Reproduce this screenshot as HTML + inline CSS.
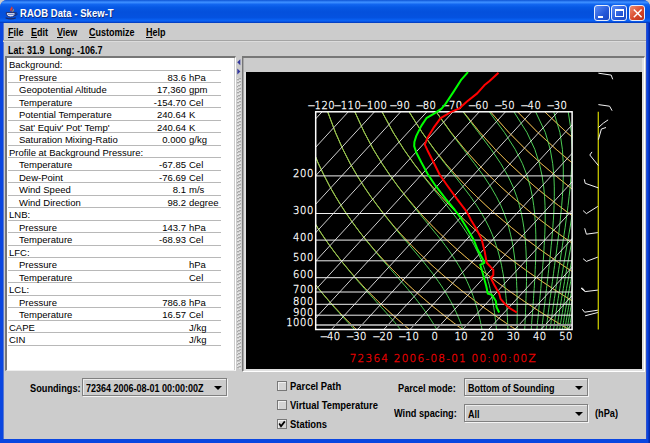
<!DOCTYPE html>
<html><head><meta charset="utf-8"><title>RAOB Data - Skew-T</title>
<style>
*{box-sizing:border-box;margin:0;padding:0}
html,body{width:650px;height:443px;overflow:hidden;background:#ccc}
body{position:relative;font-family:"Liberation Sans",Arial,sans-serif;color:#000}
.abs{position:absolute}
#win{position:absolute;left:0;top:0;width:650px;height:443px;background:linear-gradient(90deg,#0a46e0 0,#0a46e0 648px,#0428a8 649px);border-radius:7px 7px 0 0;overflow:hidden}
#title{position:absolute;left:0;top:0;width:650px;height:23px;background:linear-gradient(#0a4fd0 0,#2a78f0 5%,#3a8cff 11%,#1266f0 19%,#0658e4 32%,#0450dc 52%,#0452e0 76%,#0a62f4 89%,#0652e0 95%,#0232b0 100%)}
#title .t{position:absolute;left:20px;top:7px;transform:scaleX(.82);transform-origin:0 0;font:bold 11.5px "Liberation Sans",sans-serif;color:#fff;text-shadow:1px 1px 0 #0a2a80;white-space:nowrap;letter-spacing:.1px}
#content{position:absolute;left:3px;top:23px;width:643px;height:416px;background:#ccc;border-left:1px solid #5878d0;box-shadow:1px 0 0 #2a4ed0}
.menu{position:absolute;top:27px;font:bold 10px "Liberation Sans",sans-serif;white-space:nowrap;transform:scaleX(.9);transform-origin:0 0}
.menu u{text-decoration:underline;text-underline-offset:1px}
.lbl{position:absolute;font:bold 10px "Liberation Sans",sans-serif;white-space:nowrap;transform:scaleX(.92);transform-origin:0 0}
.btn{position:absolute;top:5px;width:16px;height:16px;border:1px solid #e8eefc;border-radius:3px}
#lpanel{position:absolute;left:5px;top:56px;width:231px;height:315px;background:#fff;border:2px solid #777;border-right:1px solid #fff;border-bottom:1px solid #eee;box-shadow:inset -1px 0 0 #ccc}
.row{position:absolute;left:8px;width:213px;height:12.5px;border-bottom:1px solid #b8b8b8;font:9.5px "Liberation Sans",sans-serif;white-space:nowrap}
.row span{position:absolute;top:1px;line-height:11px}
.combo{position:absolute;background:#ccc;border:1px solid #808080;box-shadow:inset 1px 1px 0 #ececec, 1px 1px 0 #f4f4f4;font:bold 9.5px "Liberation Sans",sans-serif;white-space:nowrap}
.combo span{position:absolute;left:3px;top:4px;font-size:10px;transform:scaleX(.9);transform-origin:0 0}
.combo i{position:absolute;right:4px;top:6.5px;width:0;height:0;border-left:4.5px solid transparent;border-right:4.5px solid transparent;border-top:4.5px solid #000}
.cb{position:absolute;width:10px;height:10px;border:1px solid #777;background:#d4d4d4;box-shadow:inset 1px 1px 0 #f0f0f0}
</style></head><body>
<div id="win">
<div id="title">
<svg class="abs" style="left:5px;top:5px" width="14" height="15" viewBox="0 0 14 15">
<path d="M6.2 0.8C7.6 2.4 4.4 3.6 5.4 5.8C5.8 6.7 6.6 7.1 6.6 7.1C5.6 5.6 8.2 4.6 7.6 2.6Z" fill="#ee3a24"/>
<path d="M8 3.2C9.2 4.2 6.8 5.4 7.4 7C8.8 5.8 9.6 4.8 8 3.2Z" fill="#f8a020"/>
<path d="M1.2 7.6H10.2C10.2 10.6 8.6 12 5.7 12S1.2 10.6 1.2 7.6Z" fill="#dfe6f8" stroke="#1c2a6c" stroke-width="1"/>
<path d="M10.2 8C12.8 7.2 13 10.4 9.6 10.6" fill="none" stroke="#1c2a6c" stroke-width="1"/>
<path d="M0.6 12.9C3.6 13.9 8 13.9 10.8 12.9" fill="none" stroke="#1c2a6c" stroke-width="1.2"/>
<path d="M2.6 9.4H8.8" stroke="#6a80c8" stroke-width="1"/>
</svg>
<div class="t">RAOB Data - Skew-T</div>
<div class="btn" style="left:594px;background:linear-gradient(135deg,#5c8df6,#2457d8 60%,#1c48c0)"><b class="abs" style="left:3px;top:10px;width:5px;height:2px;background:#fff"></b></div>
<div class="btn" style="left:611px;background:linear-gradient(135deg,#5c8df6,#2457d8 60%,#1c48c0)"><b class="abs" style="left:3px;top:3px;width:9px;height:8px;border:1px solid #fff;border-top-width:2px"></b></div>
<div class="btn" style="left:629px;background:linear-gradient(135deg,#ee8c70,#d8482a 55%,#b8321c)"><svg class="abs" style="left:1px;top:1px" width="12" height="12" viewBox="0 0 12 12"><path d="M2.8 2.5L10.6 10.3M10.6 2.5L2.8 10.3" stroke="#fff" stroke-width="1.5"/></svg></div>
</div>
<div id="content"></div>
<div class="abs" style="left:3px;top:40px;width:643px;height:1px;background:#a4a4a4"></div>
<div class="abs" style="left:3px;top:41px;width:643px;height:1px;background:#dcdcdc"></div>
<div class="menu" style="left:8px"><u>F</u>ile</div>
<div class="menu" style="left:31px"><u>E</u>dit</div>
<div class="menu" style="left:57px"><u>V</u>iew</div>
<div class="menu" style="left:89px"><u>C</u>ustomize</div>
<div class="menu" style="left:146px"><u>H</u>elp</div>
<div class="lbl" style="left:8px;top:45px;transform:scaleX(.9)">Lat: 31.9&nbsp; Long: -106.7</div>
<div id="lpanel"></div>

<div class="row" style="top:58.3px"><span style="left:1px">Background:</span></div>
<div class="row" style="top:70.8px"><span style="left:11px">Pressure</span><span style="right:35px">83.6</span><span style="left:181px">hPa</span></div>
<div class="row" style="top:83.3px"><span style="left:11px">Geopotential Altitude</span><span style="right:35px">17,360</span><span style="left:181px">gpm</span></div>
<div class="row" style="top:95.8px"><span style="left:11px">Temperature</span><span style="right:35px">-154.70</span><span style="left:181px">Cel</span></div>
<div class="row" style="top:108.3px"><span style="left:11px">Potential Temperature</span><span style="right:35px">240.64</span><span style="left:181px">K</span></div>
<div class="row" style="top:120.8px"><span style="left:11px">Sat' Equiv' Pot' Temp'</span><span style="right:35px">240.64</span><span style="left:181px">K</span></div>
<div class="row" style="top:133.3px"><span style="left:11px">Saturation Mixing-Ratio</span><span style="right:35px">0.000</span><span style="left:181px">g/kg</span></div>
<div class="row" style="top:145.8px"><span style="left:1px">Profile at Background Pressure:</span></div>
<div class="row" style="top:158.3px"><span style="left:11px">Temperature</span><span style="right:35px">-67.85</span><span style="left:181px">Cel</span></div>
<div class="row" style="top:170.8px"><span style="left:11px">Dew-Point</span><span style="right:35px">-76.69</span><span style="left:181px">Cel</span></div>
<div class="row" style="top:183.3px"><span style="left:11px">Wind Speed</span><span style="right:35px">8.1</span><span style="left:181px">m/s</span></div>
<div class="row" style="top:195.8px"><span style="left:11px">Wind Direction</span><span style="right:35px">98.2</span><span style="left:181px">degree</span></div>
<div class="row" style="top:208.3px"><span style="left:1px">LNB:</span></div>
<div class="row" style="top:220.8px"><span style="left:11px">Pressure</span><span style="right:35px">143.7</span><span style="left:181px">hPa</span></div>
<div class="row" style="top:233.3px"><span style="left:11px">Temperature</span><span style="right:35px">-68.93</span><span style="left:181px">Cel</span></div>
<div class="row" style="top:245.8px"><span style="left:1px">LFC:</span></div>
<div class="row" style="top:258.3px"><span style="left:11px">Pressure</span><span style="left:181px">hPa</span></div>
<div class="row" style="top:270.8px"><span style="left:11px">Temperature</span><span style="left:181px">Cel</span></div>
<div class="row" style="top:283.3px"><span style="left:1px">LCL:</span></div>
<div class="row" style="top:295.8px"><span style="left:11px">Pressure</span><span style="right:35px">786.8</span><span style="left:181px">hPa</span></div>
<div class="row" style="top:308.3px"><span style="left:11px">Temperature</span><span style="right:35px">16.57</span><span style="left:181px">Cel</span></div>
<div class="row" style="top:320.8px"><span style="left:1px">CAPE</span><span style="left:181px">J/kg</span></div>
<div class="row" style="top:333.3px"><span style="left:1px">CIN</span><span style="left:181px">J/kg</span></div>
<div class="abs" style="left:237px;top:78px;width:4px;height:291px;background:repeating-linear-gradient(155deg,#e4e4e4 0,#e4e4e4 1px,#a8a8a8 1.2px,#a8a8a8 2px,#ccc 2.2px,#ccc 3px)"></div>
<svg class="abs" style="left:236px;top:58px" width="6" height="18" viewBox="0 0 6 18"><path d="M4.3 1.2V7.2L1.2 4.2Z" fill="#34389c"/><path d="M1.3 10.4V16.4L4.4 13.4Z" fill="#34389c"/></svg>
<div class="abs" style="left:242px;top:56px;width:403px;height:316px;background:#e0e0e0;border:1px solid #777;border-top-width:2px;border-right-color:#fff;border-bottom-color:#fff;box-shadow:inset 1px 0 0 #a8a8a8"></div>
<div class="abs" style="left:244px;top:58px;width:398px;height:14px;background:#ccc"></div>
<div class="abs" style="left:245.5px;top:71.5px;width:396.1px;height:297.5px;background:#000"></div>
<svg class="abs" style="left:245px;top:71px" width="396" height="298" viewBox="245 71 396 298" font-family="Liberation Mono, monospace">
<defs><clipPath id="cp"><rect x="315.7" y="111.8" width="256.40000000000003" height="217.7"/></clipPath></defs>
<g clip-path="url(#cp)" fill="none">
<path d="M250.1 329.5L248.5 327.3L246.9 325.0L245.3 322.6L243.7 320.2L242.1 317.8L240.4 315.2L238.8 312.6L237.1 309.9L235.4 307.2L233.7 304.3L232.0 301.4L230.3 298.3L228.5 295.2L226.8 292.0L225.0 288.6L223.2 285.1L221.4 281.5L219.6 277.7L217.8 273.7L216.0 269.6L214.1 265.3L212.3 260.8L210.4 256.0L208.6 251.0L206.8 245.7L204.9 240.1L203.1 234.2L201.3 227.8L199.5 220.9L197.8 213.5L196.1 205.4L194.6 196.6L193.2 186.9L192.0 175.9L191.1 163.6L190.6 149.3L190.8 132.4L192.1 111.8M303.2 329.5L301.3 327.3L299.3 325.0L297.4 322.6L295.4 320.2L293.3 317.8L291.3 315.2L289.2 312.6L287.1 309.9L285.0 307.2L282.9 304.3L280.7 301.4L278.5 298.3L276.3 295.2L274.1 292.0L271.8 288.6L269.6 285.1L267.2 281.5L264.9 277.7L262.5 273.7L260.1 269.6L257.7 265.3L255.3 260.8L252.8 256.0L250.3 251.0L247.8 245.7L245.2 240.1L242.7 234.2L240.1 227.8L237.5 220.9L234.9 213.5L232.4 205.4L229.8 196.6L227.4 186.9L225.1 175.9L222.9 163.6L221.1 149.3L219.7 132.4L219.2 111.8M356.4 329.5L354.1 327.3L351.7 325.0L349.4 322.6L347.0 320.2L344.6 317.8L342.1 315.2L339.7 312.6L337.2 309.9L334.6 307.2L332.0 304.3L329.4 301.4L326.8 298.3L324.1 295.2L321.4 292.0L318.7 288.6L315.9 285.1L313.1 281.5L310.2 277.7L307.3 273.7L304.3 269.6L301.3 265.3L298.3 260.8L295.2 256.0L292.0 251.0L288.8 245.7L285.6 240.1L282.2 234.2L278.9 227.8L275.5 220.9L272.1 213.5L268.6 205.4L265.1 196.6L261.6 186.9L258.1 175.9L254.7 163.6L251.5 149.3L248.6 132.4L246.4 111.8M409.5 329.5L406.8 327.3L404.1 325.0L401.4 322.6L398.6 320.2L395.8 317.8L393.0 315.2L390.1 312.6L387.2 309.9L384.2 307.2L381.2 304.3L378.2 301.4L375.1 298.3L371.9 295.2L368.7 292.0L365.5 288.6L362.2 285.1L358.9 281.5L355.5 277.7L352.0 273.7L348.5 269.6L344.9 265.3L341.2 260.8L337.5 256.0L333.7 251.0L329.8 245.7L325.9 240.1L321.8 234.2L317.7 227.8L313.5 220.9L309.2 213.5L304.8 205.4L300.3 196.6L295.8 186.9L291.2 175.9L286.6 163.6L282.0 149.3L277.5 132.4L273.5 111.8M462.7 329.5L459.6 327.3L456.5 325.0L453.4 322.6L450.3 320.2L447.1 317.8L443.8 315.2L440.5 312.6L437.2 309.9L433.8 307.2L430.4 304.3L426.9 301.4L423.3 298.3L419.7 295.2L416.1 292.0L412.3 288.6L408.5 285.1L404.7 281.5L400.7 277.7L396.7 273.7L392.6 269.6L388.5 265.3L384.2 260.8L379.9 256.0L375.4 251.0L370.9 245.7L366.2 240.1L361.4 234.2L356.5 227.8L351.5 220.9L346.3 213.5L341.0 205.4L335.6 196.6L330.0 186.9L324.3 175.9L318.4 163.6L312.4 149.3L306.4 132.4L300.6 111.8M515.8 329.5L512.4 327.3L508.9 325.0L505.4 322.6L501.9 320.2L498.3 317.8L494.7 315.2L491.0 312.6L487.2 309.9L483.4 307.2L479.5 304.3L475.6 301.4L471.6 298.3L467.5 295.2L463.4 292.0L459.2 288.6L454.9 285.1L450.5 281.5L446.0 277.7L441.5 273.7L436.8 269.6L432.0 265.3L427.2 260.8L422.2 256.0L417.1 251.0L411.9 245.7L406.5 240.1L401.0 234.2L395.3 227.8L389.5 220.9L383.5 213.5L377.3 205.4L370.8 196.6L364.2 186.9L357.3 175.9L350.2 163.6L342.9 149.3L335.4 132.4L327.7 111.8M568.9 329.5L565.2 327.3L561.3 325.0L557.5 322.6L553.5 320.2L549.6 317.8L545.5 315.2L541.4 312.6L537.2 309.9L533.0 307.2L528.7 304.3L524.3 301.4L519.9 298.3L515.3 295.2L510.7 292.0L506.0 288.6L501.2 285.1L496.3 281.5L491.3 277.7L486.2 273.7L481.0 269.6L475.6 265.3L470.2 260.8L464.6 256.0L458.8 251.0L452.9 245.7L446.8 240.1L440.6 234.2L434.1 227.8L427.5 220.9L420.6 213.5L413.5 205.4L406.1 196.6L398.4 186.9L390.4 175.9L382.1 163.6L373.3 149.3L364.3 132.4L354.8 111.8M622.1 329.5L617.9 327.3L613.7 325.0L609.5 322.6L605.2 320.2L600.8 317.8L596.4 315.2L591.8 312.6L587.3 309.9L582.6 307.2L577.9 304.3L573.0 301.4L568.1 298.3L563.1 295.2L558.0 292.0L552.8 288.6L547.5 285.1L542.1 281.5L536.6 277.7L530.9 273.7L525.1 269.6L519.2 265.3L513.1 260.8L506.9 256.0L500.5 251.0L493.9 245.7L487.2 240.1L480.2 234.2L472.9 227.8L465.5 220.9L457.7 213.5L449.7 205.4L441.3 196.6L432.6 186.9L423.5 175.9L413.9 163.6L403.8 149.3L393.2 132.4L382.0 111.8M675.2 329.5L670.7 327.3L666.1 325.0L661.5 322.6L656.8 320.2L652.0 317.8L647.2 315.2L642.3 312.6L637.3 309.9L632.2 307.2L627.0 304.3L621.7 301.4L616.4 298.3L610.9 295.2L605.3 292.0L599.6 288.6L593.8 285.1L587.9 281.5L581.8 277.7L575.6 273.7L569.3 269.6L562.8 265.3L556.1 260.8L549.3 256.0L542.2 251.0L535.0 245.7L527.5 240.1L519.7 234.2L511.8 227.8L503.5 220.9L494.9 213.5L485.9 205.4L476.6 196.6L466.8 186.9L456.5 175.9L445.7 163.6L434.3 149.3L422.1 132.4L409.1 111.8M728.3 329.5L723.5 327.3L718.5 325.0L713.5 322.6L708.5 320.2L703.3 317.8L698.0 315.2L692.7 312.6L687.3 309.9L681.8 307.2L676.2 304.3L670.5 301.4L664.6 298.3L658.7 295.2L652.7 292.0L646.5 288.6L640.2 285.1L633.7 281.5L627.1 277.7L620.4 273.7L613.5 269.6L606.4 265.3L599.1 260.8L591.6 256.0L583.9 251.0L576.0 245.7L567.8 240.1L559.3 234.2L550.6 227.8L541.5 220.9L532.0 213.5L522.2 205.4L511.8 196.6L501.0 186.9L489.6 175.9L477.6 163.6L464.7 149.3L451.0 132.4L436.2 111.8M781.5 329.5L776.2 327.3L770.9 325.0L765.6 322.6L760.1 320.2L754.5 317.8L748.9 315.2L743.2 312.6L737.3 309.9L731.4 307.2L725.3 304.3L719.2 301.4L712.9 298.3L706.5 295.2L700.0 292.0L693.3 288.6L686.5 285.1L679.5 281.5L672.4 277.7L665.1 273.7L657.6 269.6L650.0 265.3L642.1 260.8L634.0 256.0L625.6 251.0L617.0 245.7L608.1 240.1L598.9 234.2L589.4 227.8L579.5 220.9L569.1 213.5L558.4 205.4L547.1 196.6L535.2 186.9L522.7 175.9L509.4 163.6L495.2 149.3L479.9 132.4L463.3 111.8M834.6 329.5L829.0 327.3L823.3 325.0L817.6 322.6L811.7 320.2L805.8 317.8L799.7 315.2L793.6 312.6L787.3 309.9L781.0 307.2L774.5 304.3L767.9 301.4L761.2 298.3L754.3 295.2L747.3 292.0L740.1 288.6L732.8 285.1L725.3 281.5L717.7 277.7L709.8 273.7L701.8 269.6L693.5 265.3L685.0 260.8L676.3 256.0L667.3 251.0L658.0 245.7L648.4 240.1L638.5 234.2L628.2 227.8L617.5 220.9L606.3 213.5L594.6 205.4L582.3 196.6L569.4 186.9L555.8 175.9L541.2 163.6L525.6 149.3L508.8 132.4L490.5 111.8M887.7 329.5L881.8 327.3L875.7 325.0L869.6 322.6L863.4 320.2L857.0 317.8L850.6 315.2L844.0 312.6L837.4 309.9L830.6 307.2L823.7 304.3L816.6 301.4L809.4 298.3L802.1 295.2L794.6 292.0L787.0 288.6L779.1 285.1L771.1 281.5L763.0 277.7L754.6 273.7L746.0 269.6L737.1 265.3L728.0 260.8L718.7 256.0L709.0 251.0L699.1 245.7L688.8 240.1L678.1 234.2L667.0 227.8L655.5 220.9L643.4 213.5L630.8 205.4L617.6 196.6L603.6 186.9L588.8 175.9L573.0 163.6L556.1 149.3L537.7 132.4L517.6 111.8M940.9 329.5L934.6 327.3L928.1 325.0L921.6 322.6L915.0 320.2L908.3 317.8L901.4 315.2L894.5 312.6L887.4 309.9L880.2 307.2L872.8 304.3L865.3 301.4L857.7 298.3L849.9 295.2L841.9 292.0L833.8 288.6L825.5 285.1L817.0 281.5L808.2 277.7L799.3 273.7L790.1 269.6L780.7 265.3L771.0 260.8L761.0 256.0L750.7 251.0L740.1 245.7L729.1 240.1L717.7 234.2L705.8 227.8L693.5 220.9L680.6 213.5L667.0 205.4L652.8 196.6L637.8 186.9L621.9 175.9L604.9 163.6L586.5 149.3L566.6 132.4L544.7 111.8M994.0 329.5L987.3 327.3L980.5 325.0L973.6 322.6L966.6 320.2L959.5 317.8L952.3 315.2L944.9 312.6L937.4 309.9L929.8 307.2L922.0 304.3L914.0 301.4L905.9 298.3L897.7 295.2L889.2 292.0L880.6 288.6L871.8 285.1L862.8 281.5L853.5 277.7L844.0 273.7L834.3 269.6L824.3 265.3L814.0 260.8L803.4 256.0L792.4 251.0L781.1 245.7L769.4 240.1L757.2 234.2L744.6 227.8L731.4 220.9L717.7 213.5L703.3 205.4L688.1 196.6L672.0 186.9L655.0 175.9L636.7 163.6L617.0 149.3L595.5 132.4L571.8 111.8" stroke="#d0a050" stroke-width="1"/>
<path d="M250.1 329.5L248.5 327.3L246.9 325.0L245.3 322.6L243.7 320.2L242.1 317.8L240.4 315.2L238.8 312.6L237.1 309.9L235.4 307.2L233.7 304.3L232.0 301.4L230.3 298.3L228.5 295.2L226.8 292.0L225.0 288.6L223.2 285.1L221.4 281.5L219.6 277.7L217.8 273.7L216.0 269.6L214.1 265.3L212.3 260.8L210.4 256.0L208.6 251.0L206.8 245.7L204.9 240.1L203.1 234.2L201.3 227.8L199.5 220.9L197.8 213.5L196.1 205.4L194.6 196.6L193.2 186.9L192.0 175.9L191.1 163.6L190.6 149.3L190.8 132.4L192.1 111.8M303.0 329.5L301.1 327.3L299.2 325.0L297.2 322.6L295.2 320.2L293.2 317.8L291.2 315.2L289.1 312.6L287.1 309.9L285.0 307.2L282.8 304.3L280.7 301.4L278.5 298.3L276.3 295.2L274.1 292.0L271.8 288.6L269.6 285.1L267.2 281.5L264.9 277.7L262.5 273.7L260.1 269.6L257.7 265.3L255.3 260.8L252.8 256.0L250.3 251.0L247.8 245.7L245.2 240.1L242.7 234.2L240.1 227.8L237.5 220.9L234.9 213.5L232.4 205.4L229.8 196.6L227.4 186.9L225.1 175.9L222.9 163.6L221.1 149.3L219.7 132.4L219.2 111.8M354.5 329.5L352.4 327.3L350.3 325.0L348.1 322.6L345.9 320.2L343.6 317.8L341.3 315.2L339.0 312.6L336.6 309.9L334.1 307.2L331.6 304.3L329.1 301.4L326.5 298.3L323.9 295.2L321.3 292.0L318.5 288.6L315.8 285.1L313.0 281.5L310.1 277.7L307.2 273.7L304.3 269.6L301.3 265.3L298.2 260.8L295.1 256.0L292.0 251.0L288.8 245.7L285.5 240.1L282.2 234.2L278.9 227.8L275.5 220.9L272.1 213.5L268.6 205.4L265.1 196.6L261.6 186.9L258.1 175.9L254.7 163.6L251.5 149.3L248.6 132.4L246.4 111.8M400.6 329.5L398.8 327.3L396.9 325.0L394.9 322.6L392.8 320.2L390.7 317.8L388.4 315.2L386.1 312.6L383.7 309.9L381.2 307.2L378.7 304.3L376.0 301.4L373.3 298.3L370.4 295.2L367.5 292.0L364.5 288.6L361.4 285.1L358.2 281.5L355.0 277.7L351.6 273.7L348.2 269.6L344.7 265.3L341.1 260.8L337.4 256.0L333.6 251.0L329.8 245.7L325.8 240.1L321.8 234.2L317.7 227.8L313.5 220.9L309.2 213.5L304.8 205.4L300.3 196.6L295.8 186.9L291.2 175.9L286.6 163.6L282.0 149.3L277.5 132.4L273.5 111.8M436.8 329.5L435.5 327.3L434.2 325.0L432.7 322.6L431.2 320.2L429.6 317.8L427.9 315.2L426.1 312.6L424.2 309.9L422.2 307.2L420.1 304.3L417.8 301.4L415.4 298.3L412.9 295.2L410.2 292.0L407.4 288.6L404.4 285.1L401.2 281.5L398.0 277.7L394.5 273.7L390.9 269.6L387.1 265.3L383.2 260.8L379.1 256.0L374.9 251.0L370.5 245.7L365.9 240.1L361.3 234.2L356.4 227.8L351.4 220.9L346.3 213.5L341.0 205.4L335.6 196.6L330.0 186.9L324.3 175.9L318.4 163.6L312.4 149.3L306.4 132.4L300.6 111.8M463.0 329.5L462.2 327.3L461.4 325.0L460.5 322.6L459.5 320.2L458.5 317.8L457.4 315.2L456.3 312.6L455.0 309.9L453.7 307.2L452.3 304.3L450.7 301.4L449.0 298.3L447.2 295.2L445.3 292.0L443.2 288.6L440.9 285.1L438.4 281.5L435.7 277.7L432.8 273.7L429.6 269.6L426.2 265.3L422.6 260.8L418.6 256.0L414.4 251.0L409.9 245.7L405.1 240.1L400.0 234.2L394.7 227.8L389.1 220.9L383.2 213.5L377.1 205.4L370.8 196.6L364.2 186.9L357.3 175.9L350.2 163.6L342.9 149.3L335.4 132.4L327.7 111.8M482.0 329.5L481.6 327.3L481.1 325.0L480.6 322.6L480.1 320.2L479.5 317.8L478.9 315.2L478.2 312.6L477.5 309.9L476.7 307.2L475.8 304.3L474.9 301.4L473.9 298.3L472.8 295.2L471.6 292.0L470.2 288.6L468.7 285.1L467.1 281.5L465.3 277.7L463.3 273.7L461.1 269.6L458.6 265.3L455.8 260.8L452.7 256.0L449.3 251.0L445.4 245.7L441.2 240.1L436.4 234.2L431.2 227.8L425.5 220.9L419.4 213.5L412.8 205.4L405.7 196.6L398.2 186.9L390.3 175.9L382.0 163.6L373.3 149.3L364.3 132.4L354.8 111.8M496.5 329.5L496.3 327.3L496.0 325.0L495.8 322.6L495.5 320.2L495.2 317.8L494.9 315.2L494.5 312.6L494.1 309.9L493.7 307.2L493.2 304.3L492.7 301.4L492.2 298.3L491.6 295.2L490.9 292.0L490.1 288.6L489.3 285.1L488.3 281.5L487.3 277.7L486.1 273.7L484.7 269.6L483.2 265.3L481.4 260.8L479.4 256.0L477.1 251.0L474.4 245.7L471.3 240.1L467.6 234.2L463.4 227.8L458.6 220.9L453.0 213.5L446.7 205.4L439.6 196.6L431.7 186.9L423.0 175.9L413.7 163.6L403.7 149.3L393.2 132.4L382.0 111.8M507.8 329.5L507.8 327.3L507.7 325.0L507.6 322.6L507.5 320.2L507.4 317.8L507.3 315.2L507.1 312.6L507.0 309.9L506.8 307.2L506.6 304.3L506.4 301.4L506.1 298.3L505.8 295.2L505.5 292.0L505.1 288.6L504.7 285.1L504.2 281.5L503.7 277.7L503.1 273.7L502.3 269.6L501.5 265.3L500.5 260.8L499.3 256.0L498.0 251.0L496.3 245.7L494.4 240.1L492.1 234.2L489.3 227.8L485.8 220.9L481.7 213.5L476.6 205.4L470.5 196.6L463.2 186.9L454.7 175.9L444.9 163.6L434.0 149.3L422.0 132.4L409.1 111.8M517.0 329.5L517.1 327.3L517.1 325.0L517.1 322.6L517.2 320.2L517.2 317.8L517.2 315.2L517.2 312.6L517.2 309.9L517.2 307.2L517.2 304.3L517.1 301.4L517.1 298.3L517.0 295.2L517.0 292.0L516.9 288.6L516.7 285.1L516.6 281.5L516.4 277.7L516.1 273.7L515.8 269.6L515.4 265.3L515.0 260.8L514.4 256.0L513.7 251.0L512.9 245.7L511.8 240.1L510.5 234.2L508.9 227.8L506.8 220.9L504.2 213.5L500.8 205.4L496.4 196.6L490.8 186.9L483.6 175.9L474.5 163.6L463.5 149.3L450.6 132.4L436.1 111.8M524.7 329.5L524.8 327.3L524.9 325.0L525.0 322.6L525.2 320.2L525.3 317.8L525.4 315.2L525.5 312.6L525.6 309.9L525.7 307.2L525.8 304.3L525.9 301.4L526.0 298.3L526.1 295.2L526.2 292.0L526.3 288.6L526.4 285.1L526.5 281.5L526.5 277.7L526.5 273.7L526.5 269.6L526.5 265.3L526.4 260.8L526.2 256.0L526.0 251.0L525.7 245.7L525.3 240.1L524.7 234.2L523.9 227.8L522.8 220.9L521.4 213.5L519.4 205.4L516.7 196.6L513.1 186.9L507.9 175.9L500.8 163.6L491.1 149.3L478.4 132.4L463.0 111.8M531.2 329.5L531.4 327.3L531.6 325.0L531.7 322.6L531.9 320.2L532.1 317.8L532.3 315.2L532.5 312.6L532.7 309.9L532.9 307.2L533.1 304.3L533.3 301.4L533.5 298.3L533.7 295.2L533.9 292.0L534.2 288.6L534.4 285.1L534.6 281.5L534.8 277.7L535.0 273.7L535.2 269.6L535.4 265.3L535.6 260.8L535.7 256.0L535.8 251.0L535.9 245.7L535.9 240.1L535.8 234.2L535.6 227.8L535.2 220.9L534.7 213.5L533.7 205.4L532.4 196.6L530.3 186.9L527.2 175.9L522.4 163.6L515.2 149.3L504.4 132.4L489.2 111.8M536.9 329.5L537.1 327.3L537.3 325.0L537.5 322.6L537.7 320.2L538.0 317.8L538.2 315.2L538.5 312.6L538.7 309.9L539.0 307.2L539.3 304.3L539.6 301.4L539.9 298.3L540.2 295.2L540.5 292.0L540.8 288.6L541.1 285.1L541.4 281.5L541.8 277.7L542.1 273.7L542.5 269.6L542.8 265.3L543.2 260.8L543.6 256.0L543.9 251.0L544.2 245.7L544.5 240.1L544.8 234.2L545.0 227.8L545.2 220.9L545.2 213.5L545.0 205.4L544.6 196.6L543.7 186.9L542.1 175.9L539.4 163.6L534.8 149.3L526.9 132.4L513.9 111.8M541.8 329.5L542.0 327.3L542.3 325.0L542.5 322.6L542.8 320.2L543.1 317.8L543.4 315.2L543.7 312.6L544.0 309.9L544.3 307.2L544.6 304.3L545.0 301.4L545.3 298.3L545.7 295.2L546.1 292.0L546.5 288.6L546.9 285.1L547.3 281.5L547.8 277.7L548.2 273.7L548.7 269.6L549.2 265.3L549.7 260.8L550.2 256.0L550.7 251.0L551.2 245.7L551.8 240.1L552.3 234.2L552.8 227.8L553.3 220.9L553.8 213.5L554.1 205.4L554.3 196.6L554.3 186.9L553.9 175.9L552.7 163.6L550.2 149.3L545.3 132.4L535.6 111.8M546.1 329.5L546.4 327.3L546.7 325.0L547.0 322.6L547.3 320.2L547.6 317.8L547.9 315.2L548.3 312.6L548.6 309.9L549.0 307.2L549.4 304.3L549.7 301.4L550.1 298.3L550.6 295.2L551.0 292.0L551.5 288.6L551.9 285.1L552.4 281.5L552.9 277.7L553.5 273.7L554.0 269.6L554.6 265.3L555.2 260.8L555.9 256.0L556.5 251.0L557.2 245.7L557.9 240.1L558.7 234.2L559.4 227.8L560.2 220.9L560.9 213.5L561.7 205.4L562.4 196.6L563.0 186.9L563.3 175.9L563.3 163.6L562.4 149.3L559.9 132.4L553.7 111.8M550.0 329.5L550.3 327.3L550.6 325.0L551.0 322.6L551.3 320.2L551.6 317.8L552.0 315.2L552.3 312.6L552.7 309.9L553.1 307.2L553.5 304.3L554.0 301.4L554.4 298.3L554.9 295.2L555.3 292.0L555.8 288.6L556.4 285.1L556.9 281.5L557.5 277.7L558.1 273.7L558.7 269.6L559.4 265.3L560.1 260.8L560.8 256.0L561.6 251.0L562.4 245.7L563.2 240.1L564.1 234.2L565.1 227.8L566.0 220.9L567.0 213.5L568.1 205.4L569.1 196.6L570.2 186.9L571.1 175.9L571.9 163.6L572.2 149.3L571.4 132.4L568.2 111.8M553.6 329.5L553.9 327.3L554.2 325.0L554.5 322.6L554.9 320.2L555.2 317.8L555.6 315.2L556.0 312.6L556.4 309.9L556.8 307.2L557.3 304.3L557.7 301.4L558.2 298.3L558.7 295.2L559.2 292.0L559.8 288.6L560.3 285.1L560.9 281.5L561.6 277.7L562.2 273.7L562.9 269.6L563.6 265.3L564.4 260.8L565.2 256.0L566.0 251.0L566.9 245.7L567.9 240.1L568.9 234.2L570.0 227.8L571.1 220.9L572.3 213.5L573.6 205.4L574.9 196.6L576.3 186.9L577.7 175.9L579.1 163.6L580.2 149.3L580.8 132.4L579.8 111.8M556.7 329.5L557.1 327.3L557.4 325.0L557.8 322.6L558.1 320.2L558.5 317.8L558.9 315.2L559.3 312.6L559.7 309.9L560.2 307.2L560.6 304.3L561.1 301.4L561.6 298.3L562.2 295.2L562.7 292.0L563.3 288.6L563.9 285.1L564.5 281.5L565.2 277.7L565.9 273.7L566.6 269.6L567.4 265.3L568.2 260.8L569.1 256.0L570.0 251.0L571.0 245.7L572.0 240.1L573.1 234.2L574.3 227.8L575.6 220.9L576.9 213.5L578.4 205.4L579.9 196.6L581.6 186.9L583.3 175.9L585.2 163.6L587.0 149.3L588.5 132.4L589.2 111.8M559.6 329.5L560.0 327.3L560.3 325.0L560.7 322.6L561.1 320.2L561.5 317.8L561.9 315.2L562.3 312.6L562.8 309.9L563.2 307.2L563.7 304.3L564.2 301.4L564.7 298.3L565.3 295.2L565.9 292.0L566.5 288.6L567.1 285.1L567.8 281.5L568.5 277.7L569.2 273.7L570.0 269.6L570.8 265.3L571.7 260.8L572.6 256.0L573.6 251.0L574.6 245.7L575.7 240.1L576.9 234.2L578.2 227.8L579.5 220.9L581.0 213.5L582.6 205.4L584.3 196.6L586.2 186.9L588.2 175.9L590.4 163.6L592.7 149.3L595.0 132.4L597.0 111.8M562.3 329.5L562.7 327.3L563.0 325.0L563.4 322.6L563.8 320.2L564.2 317.8L564.6 315.2L565.1 312.6L565.5 309.9L566.0 307.2L566.5 304.3L567.0 301.4L567.6 298.3L568.2 295.2L568.8 292.0L569.4 288.6L570.0 285.1L570.7 281.5L571.5 277.7L572.2 273.7L573.0 269.6L573.9 265.3L574.8 260.8L575.8 256.0L576.8 251.0L577.9 245.7L579.0 240.1L580.3 234.2L581.6 227.8L583.1 220.9L584.7 213.5L586.4 205.4L588.2 196.6L590.3 186.9L592.5 175.9L595.0 163.6L597.7 149.3L600.6 132.4L603.5 111.8M564.8 329.5L565.1 327.3L565.5 325.0L565.9 322.6L566.3 320.2L566.7 317.8L567.1 315.2L567.6 312.6L568.1 309.9L568.6 307.2L569.1 304.3L569.6 301.4L570.2 298.3L570.8 295.2L571.4 292.0L572.0 288.6L572.7 285.1L573.4 281.5L574.2 277.7L575.0 273.7L575.8 269.6L576.7 265.3L577.6 260.8L578.6 256.0L579.7 251.0L580.8 245.7L582.1 240.1L583.4 234.2L584.8 227.8L586.3 220.9L588.0 213.5L589.8 205.4L591.8 196.6L593.9 186.9L596.4 175.9L599.1 163.6L602.1 149.3L605.5 132.4L609.1 111.8M567.0 329.5L567.4 327.3L567.8 325.0L568.2 322.6L568.6 320.2L569.0 317.8L569.5 315.2L569.9 312.6L570.4 309.9L570.9 307.2L571.5 304.3L572.0 301.4L572.6 298.3L573.2 295.2L573.8 292.0L574.5 288.6L575.2 285.1L575.9 281.5L576.7 277.7L577.5 273.7L578.4 269.6L579.3 265.3L580.2 260.8L581.3 256.0L582.4 251.0L583.6 245.7L584.8 240.1L586.2 234.2L587.6 227.8L589.2 220.9L590.9 213.5L592.8 205.4L594.9 196.6L597.2 186.9L599.8 175.9L602.7 163.6L606.0 149.3L609.7 132.4L613.9 111.8M569.1 329.5L569.5 327.3L569.9 325.0L570.3 322.6L570.7 320.2L571.2 317.8L571.6 315.2L572.1 312.6L572.6 309.9L573.1 307.2L573.7 304.3L574.2 301.4L574.8 298.3L575.4 295.2L576.1 292.0L576.8 288.6L577.5 285.1L578.2 281.5L579.0 277.7L579.8 273.7L580.7 269.6L581.7 265.3L582.7 260.8L583.7 256.0L584.8 251.0L586.0 245.7L587.3 240.1L588.7 234.2L590.2 227.8L591.9 220.9L593.7 213.5L595.6 205.4L597.8 196.6L600.2 186.9L602.9 175.9L606.0 163.6L609.5 149.3L613.5 132.4L618.2 111.8" stroke="#4ccc54" stroke-width="1"/>
<path d="M250.1 329.5L248.5 327.3L246.9 325.0L245.3 322.6L243.7 320.2L242.1 317.8L240.4 315.2L238.8 312.6L237.1 309.9L235.4 307.2L233.7 304.3L232.0 301.4L230.3 298.3L228.5 295.2L226.8 292.0L225.0 288.6L223.2 285.1L221.4 281.5L219.6 277.7L217.8 273.7L216.0 269.6L214.1 265.3L212.3 260.8L210.4 256.0L208.6 251.0L206.8 245.7L204.9 240.1L203.1 234.2L201.3 227.8L199.5 220.9L197.8 213.5L196.1 205.4L194.6 196.6L193.2 186.9L192.0 175.9L191.1 163.6L190.6 149.3L190.8 132.4L192.1 111.8M303.2 329.5L301.3 327.3L299.3 325.0L297.4 322.6L295.4 320.2L293.3 317.8L291.3 315.2L289.2 312.6L287.1 309.9L285.0 307.2L282.9 304.3L280.7 301.4L278.5 298.3L276.3 295.2L274.1 292.0L271.8 288.6L269.6 285.1L267.2 281.5L264.9 277.7L262.5 273.7L260.1 269.6L257.7 265.3L255.3 260.8L252.8 256.0L250.3 251.0L247.8 245.7L245.2 240.1L242.7 234.2L240.1 227.8L237.5 220.9L234.9 213.5L232.4 205.4L229.8 196.6L227.4 186.9L225.1 175.9L222.9 163.6L221.1 149.3L219.7 132.4L219.2 111.8M356.4 329.5L354.1 327.3L351.7 325.0L349.4 322.6L347.0 320.2L344.6 317.8L342.1 315.2L339.7 312.6L337.2 309.9L334.6 307.2L332.0 304.3L329.4 301.4L326.8 298.3L324.1 295.2L321.4 292.0L318.7 288.6L315.9 285.1L313.1 281.5L310.2 277.7L307.3 273.7L304.3 269.6L301.3 265.3L298.3 260.8L295.2 256.0L292.0 251.0L288.8 245.7L285.6 240.1L282.2 234.2L278.9 227.8L275.5 220.9L272.1 213.5L268.6 205.4L265.1 196.6L261.6 186.9L258.1 175.9L254.7 163.6L251.5 149.3L248.6 132.4L246.4 111.8M409.5 329.5L406.8 327.3L404.1 325.0L401.4 322.6L398.6 320.2L395.8 317.8L393.0 315.2L390.1 312.6L387.2 309.9L384.2 307.2L381.2 304.3L378.2 301.4L375.1 298.3L371.9 295.2L368.7 292.0L365.5 288.6L362.2 285.1L358.9 281.5L355.5 277.7L352.0 273.7L348.5 269.6L344.9 265.3L341.2 260.8L337.5 256.0L333.7 251.0L329.8 245.7L325.9 240.1L321.8 234.2L317.7 227.8L313.5 220.9L309.2 213.5L304.8 205.4L300.3 196.6L295.8 186.9L291.2 175.9L286.6 163.6L282.0 149.3L277.5 132.4L273.5 111.8M462.7 329.5L459.6 327.3L456.5 325.0L453.4 322.6L450.3 320.2L447.1 317.8L443.8 315.2L440.5 312.6L437.2 309.9L433.8 307.2L430.4 304.3L426.9 301.4L423.3 298.3L419.7 295.2L416.1 292.0L412.3 288.6L408.5 285.1L404.7 281.5L400.7 277.7L396.7 273.7L392.6 269.6L388.5 265.3L384.2 260.8L379.9 256.0L375.4 251.0L370.9 245.7L366.2 240.1L361.4 234.2L356.5 227.8L351.5 220.9L346.3 213.5L341.0 205.4L335.6 196.6L330.0 186.9L324.3 175.9L318.4 163.6L312.4 149.3L306.4 132.4L300.6 111.8M515.8 329.5L512.4 327.3L508.9 325.0L505.4 322.6L501.9 320.2L498.3 317.8L494.7 315.2L491.0 312.6L487.2 309.9L483.4 307.2L479.5 304.3L475.6 301.4L471.6 298.3L467.5 295.2L463.4 292.0L459.2 288.6L454.9 285.1L450.5 281.5L446.0 277.7L441.5 273.7L436.8 269.6L432.0 265.3L427.2 260.8L422.2 256.0L417.1 251.0L411.9 245.7L406.5 240.1L401.0 234.2L395.3 227.8L389.5 220.9L383.5 213.5L377.3 205.4L370.8 196.6L364.2 186.9L357.3 175.9L350.2 163.6L342.9 149.3L335.4 132.4L327.7 111.8M568.9 329.5L565.2 327.3L561.3 325.0L557.5 322.6L553.5 320.2L549.6 317.8L545.5 315.2L541.4 312.6L537.2 309.9L533.0 307.2L528.7 304.3L524.3 301.4L519.9 298.3L515.3 295.2L510.7 292.0L506.0 288.6L501.2 285.1L496.3 281.5L491.3 277.7L486.2 273.7L481.0 269.6L475.6 265.3L470.2 260.8L464.6 256.0L458.8 251.0L452.9 245.7L446.8 240.1L440.6 234.2L434.1 227.8L427.5 220.9L420.6 213.5L413.5 205.4L406.1 196.6L398.4 186.9L390.4 175.9L382.1 163.6L373.3 149.3L364.3 132.4L354.8 111.8M622.1 329.5L617.9 327.3L613.7 325.0L609.5 322.6L605.2 320.2L600.8 317.8L596.4 315.2L591.8 312.6L587.3 309.9L582.6 307.2L577.9 304.3L573.0 301.4L568.1 298.3L563.1 295.2L558.0 292.0L552.8 288.6L547.5 285.1L542.1 281.5L536.6 277.7L530.9 273.7L525.1 269.6L519.2 265.3L513.1 260.8L506.9 256.0L500.5 251.0L493.9 245.7L487.2 240.1L480.2 234.2L472.9 227.8L465.5 220.9L457.7 213.5L449.7 205.4L441.3 196.6L432.6 186.9L423.5 175.9L413.9 163.6L403.8 149.3L393.2 132.4L382.0 111.8M675.2 329.5L670.7 327.3L666.1 325.0L661.5 322.6L656.8 320.2L652.0 317.8L647.2 315.2L642.3 312.6L637.3 309.9L632.2 307.2L627.0 304.3L621.7 301.4L616.4 298.3L610.9 295.2L605.3 292.0L599.6 288.6L593.8 285.1L587.9 281.5L581.8 277.7L575.6 273.7L569.3 269.6L562.8 265.3L556.1 260.8L549.3 256.0L542.2 251.0L535.0 245.7L527.5 240.1L519.7 234.2L511.8 227.8L503.5 220.9L494.9 213.5L485.9 205.4L476.6 196.6L466.8 186.9L456.5 175.9L445.7 163.6L434.3 149.3L422.1 132.4L409.1 111.8M728.3 329.5L723.5 327.3L718.5 325.0L713.5 322.6L708.5 320.2L703.3 317.8L698.0 315.2L692.7 312.6L687.3 309.9L681.8 307.2L676.2 304.3L670.5 301.4L664.6 298.3L658.7 295.2L652.7 292.0L646.5 288.6L640.2 285.1L633.7 281.5L627.1 277.7L620.4 273.7L613.5 269.6L606.4 265.3L599.1 260.8L591.6 256.0L583.9 251.0L576.0 245.7L567.8 240.1L559.3 234.2L550.6 227.8L541.5 220.9L532.0 213.5L522.2 205.4L511.8 196.6L501.0 186.9L489.6 175.9L477.6 163.6L464.7 149.3L451.0 132.4L436.2 111.8M781.5 329.5L776.2 327.3L770.9 325.0L765.6 322.6L760.1 320.2L754.5 317.8L748.9 315.2L743.2 312.6L737.3 309.9L731.4 307.2L725.3 304.3L719.2 301.4L712.9 298.3L706.5 295.2L700.0 292.0L693.3 288.6L686.5 285.1L679.5 281.5L672.4 277.7L665.1 273.7L657.6 269.6L650.0 265.3L642.1 260.8L634.0 256.0L625.6 251.0L617.0 245.7L608.1 240.1L598.9 234.2L589.4 227.8L579.5 220.9L569.1 213.5L558.4 205.4L547.1 196.6L535.2 186.9L522.7 175.9L509.4 163.6L495.2 149.3L479.9 132.4L463.3 111.8M834.6 329.5L829.0 327.3L823.3 325.0L817.6 322.6L811.7 320.2L805.8 317.8L799.7 315.2L793.6 312.6L787.3 309.9L781.0 307.2L774.5 304.3L767.9 301.4L761.2 298.3L754.3 295.2L747.3 292.0L740.1 288.6L732.8 285.1L725.3 281.5L717.7 277.7L709.8 273.7L701.8 269.6L693.5 265.3L685.0 260.8L676.3 256.0L667.3 251.0L658.0 245.7L648.4 240.1L638.5 234.2L628.2 227.8L617.5 220.9L606.3 213.5L594.6 205.4L582.3 196.6L569.4 186.9L555.8 175.9L541.2 163.6L525.6 149.3L508.8 132.4L490.5 111.8M887.7 329.5L881.8 327.3L875.7 325.0L869.6 322.6L863.4 320.2L857.0 317.8L850.6 315.2L844.0 312.6L837.4 309.9L830.6 307.2L823.7 304.3L816.6 301.4L809.4 298.3L802.1 295.2L794.6 292.0L787.0 288.6L779.1 285.1L771.1 281.5L763.0 277.7L754.6 273.7L746.0 269.6L737.1 265.3L728.0 260.8L718.7 256.0L709.0 251.0L699.1 245.7L688.8 240.1L678.1 234.2L667.0 227.8L655.5 220.9L643.4 213.5L630.8 205.4L617.6 196.6L603.6 186.9L588.8 175.9L573.0 163.6L556.1 149.3L537.7 132.4L517.6 111.8M940.9 329.5L934.6 327.3L928.1 325.0L921.6 322.6L915.0 320.2L908.3 317.8L901.4 315.2L894.5 312.6L887.4 309.9L880.2 307.2L872.8 304.3L865.3 301.4L857.7 298.3L849.9 295.2L841.9 292.0L833.8 288.6L825.5 285.1L817.0 281.5L808.2 277.7L799.3 273.7L790.1 269.6L780.7 265.3L771.0 260.8L761.0 256.0L750.7 251.0L740.1 245.7L729.1 240.1L717.7 234.2L705.8 227.8L693.5 220.9L680.6 213.5L667.0 205.4L652.8 196.6L637.8 186.9L621.9 175.9L604.9 163.6L586.5 149.3L566.6 132.4L544.7 111.8M994.0 329.5L987.3 327.3L980.5 325.0L973.6 322.6L966.6 320.2L959.5 317.8L952.3 315.2L944.9 312.6L937.4 309.9L929.8 307.2L922.0 304.3L914.0 301.4L905.9 298.3L897.7 295.2L889.2 292.0L880.6 288.6L871.8 285.1L862.8 281.5L853.5 277.7L844.0 273.7L834.3 269.6L824.3 265.3L814.0 260.8L803.4 256.0L792.4 251.0L781.1 245.7L769.4 240.1L757.2 234.2L744.6 227.8L731.4 220.9L717.7 213.5L703.3 205.4L688.1 196.6L672.0 186.9L655.0 175.9L636.7 163.6L617.0 149.3L595.5 132.4L571.8 111.8" stroke="#e8c040" stroke-width="1" opacity="0.45"/>
<path d="M17.0 329.5L217.3 111.8M43.2 329.5L243.5 111.8M69.4 329.5L269.7 111.8M95.6 329.5L295.9 111.8M121.8 329.5L322.1 111.8M148.0 329.5L348.3 111.8M174.2 329.5L374.5 111.8M200.4 329.5L400.7 111.8M226.6 329.5L426.9 111.8M252.8 329.5L453.1 111.8M279.0 329.5L479.3 111.8M305.2 329.5L505.5 111.8M331.4 329.5L531.7 111.8M357.6 329.5L557.9 111.8M383.8 329.5L584.1 111.8M410.0 329.5L610.3 111.8M436.2 329.5L636.5 111.8M462.4 329.5L662.7 111.8M488.6 329.5L688.9 111.8M514.8 329.5L715.1 111.8M541.0 329.5L741.3 111.8M567.2 329.5L767.5 111.8" stroke="#d0d0d0" stroke-width="1"/>
<path d="M315.7 175.9H572.1M315.7 213.5H572.1M315.7 240.1H572.1M315.7 260.8H572.1M315.7 277.7H572.1M315.7 292.0H572.1M315.7 304.3H572.1M315.7 315.2H572.1" stroke="#f0f0f0" stroke-width="1"/>
<path d="M315.7 325.0H572.1" stroke="#9a9a9a" stroke-width="2"/>
</g>
<rect x="315.7" y="111.8" width="256.40000000000003" height="217.7" fill="none" stroke="#fff" stroke-width="1.5"/>
<g fill="#fff" stroke="#fff" stroke-width="0.3" font-family="DejaVu Sans Light, DejaVu Sans, sans-serif" font-size="10" letter-spacing="0.45" text-anchor="middle">
<text x="321.2" y="108.5">−<tspan dx="-1.6">120</tspan></text>
<text x="347.4" y="108.5">−<tspan dx="-1.6">110</tspan></text>
<text x="373.6" y="108.5">−<tspan dx="-1.6">100</tspan></text>
<text x="399.8" y="108.5">−<tspan dx="-1.6">90</tspan></text>
<text x="426.0" y="108.5">−<tspan dx="-1.6">80</tspan></text>
<text x="452.2" y="108.5">−<tspan dx="-1.6">70</tspan></text>
<text x="478.4" y="108.5">−<tspan dx="-1.6">60</tspan></text>
<text x="504.6" y="108.5">−<tspan dx="-1.6">50</tspan></text>
<text x="530.8" y="108.5">−<tspan dx="-1.6">40</tspan></text>
<text x="557.0" y="108.5">−<tspan dx="-1.6">30</tspan></text>
<text x="330.2" y="340">−<tspan dx="-1.6">40</tspan></text>
<text x="356.4" y="340">−<tspan dx="-1.6">30</tspan></text>
<text x="382.6" y="340">−<tspan dx="-1.6">20</tspan></text>
<text x="408.8" y="340">−<tspan dx="-1.6">10</tspan></text>
<text x="435.0" y="340">0</text>
<text x="461.2" y="340">10</text>
<text x="487.4" y="340">20</text>
<text x="513.6" y="340">30</text>
<text x="539.8" y="340">40</text>
<text x="566.0" y="340">50</text>
</g><g fill="#fff" stroke="#fff" stroke-width="0.3" font-family="DejaVu Sans Light, DejaVu Sans, sans-serif" font-size="10" letter-spacing="0.6" text-anchor="end">
<text x="314" y="176.5">200</text>
<text x="314" y="214.1">300</text>
<text x="314" y="240.7">400</text>
<text x="314" y="261.4">500</text>
<text x="314" y="278.3">600</text>
<text x="314" y="292.6">700</text>
<text x="314" y="304.9">800</text>
<text x="314" y="315.8">900</text>
<text x="314" y="325.6">1000</text>
</g>
<text x="349.7" y="362.3" fill="#f00000" stroke="#f00000" stroke-width="0.3" font-family="DejaVu Sans Light, DejaVu Sans, sans-serif" font-size="10.5" textLength="186" lengthAdjust="spacing">72364 2006-08-01 00:00:00Z</text>
<path d="M598.3 111.8V329.5" stroke="#c4c400" stroke-width="1.3"/>
<path d="M598.4 73.2L611.2 75.1L612.7 79.3M598.4 104.6L609.6 106.2L612.1 110.7M598.4 127.5L603.5 123.0L608.1 119.9M598.4 139.7L601.4 129.0L606.0 127.5M598.4 165.6L589.8 155.0L592.0 151.9M598.4 187.9L585.2 183.3L584.3 179.3M597.8 206.4L586.4 213.6L583.1 210.6M597.8 232.6L586.4 234.2L584.7 228.3M597.8 257.1L586.4 261.4L583.1 258.7M597.8 290.1L585.1 291.6L581.1 288.3L582.3 288.0L584.8 290.8M597.8 310.2L584.6 312.2L582.3 309.2M597.8 312.5L585.1 315.8" fill="none" stroke="#f4f4f4" stroke-width="1" stroke-linejoin="round"/>
<path d="M498.5 72.7L489.3 81.2L484.3 85.3L477.2 93.4L467.0 101.5L458.9 108.7L450.8 112.1L440.6 118.2L433.5 127.9L427.4 138.1L424.8 144.6L427.4 150.2L432.5 160.3L439.6 174.5L446.7 184.7L456.9 198.9L467.0 212.1L471.1 220.2L476.6 229.2L481.7 239.4L484.7 251.6L486.7 262.8L493.3 269.9L493.3 275.0L490.8 278.0L494.9 286.1L499.2 293.5L500.6 298.9L504.7 303.7L510.1 308.4L516.8 312.5" fill="none" stroke="#ff0000" stroke-width="2" stroke-linejoin="round"/>
<path d="M468.0 72.1L460.9 80.2L453.8 91.4L445.7 103.6L441.6 108.7L434.5 113.3L426.4 118.2L421.3 125.9L416.2 136.1L414.4 142.0L414.2 146.1L416.2 152.2L421.3 162.3L427.4 173.5L435.5 185.7L445.7 198.9L454.8 210.0L460.9 218.2L466.4 227.2L473.5 239.4L477.6 249.6L483.7 260.7L484.3 262.8L480.2 264.8L482.7 272.9L485.1 282.1L486.4 286.8L487.7 293.5L491.8 294.9L495.9 301.0L496.5 307.1L499.2 312.5" fill="none" stroke="#00ff00" stroke-width="2" stroke-linejoin="round"/>
</svg>
<div class="lbl" style="left:30px;top:383px">Soundings:</div>
<div class="combo" style="left:82px;top:378px;width:145px;height:18px"><span>72364 2006-08-01 00:00:00Z</span><i></i></div>
<div class="cb" style="left:277px;top:381px"></div><div class="lbl" style="left:290px;top:381px;transform:scaleX(.94)">Parcel Path</div>
<div class="cb" style="left:277px;top:400px"></div><div class="lbl" style="left:290px;top:400px;transform:scaleX(.94)">Virtual Temperature</div>
<div class="cb" style="left:277px;top:419px"><svg class="abs" style="left:0;top:0" width="8" height="8" viewBox="0 0 8 8"><path d="M1.2 3.6L3 6.2L6.8 1.4" fill="none" stroke="#000" stroke-width="1.7"/></svg></div><div class="lbl" style="left:290px;top:419px;transform:scaleX(.94)">Stations</div>
<div class="lbl" style="left:398px;top:383px">Parcel mode:</div>
<div class="combo" style="left:464px;top:378px;width:124px;height:18px"><span>Bottom of Sounding</span><i></i></div>
<div class="lbl" style="left:394px;top:408px">Wind spacing:</div>
<div class="combo" style="left:464px;top:404px;width:124px;height:18px"><span>All</span><i></i></div>
<div class="lbl" style="left:595px;top:408px">(hPa)</div>
</div></body></html>
